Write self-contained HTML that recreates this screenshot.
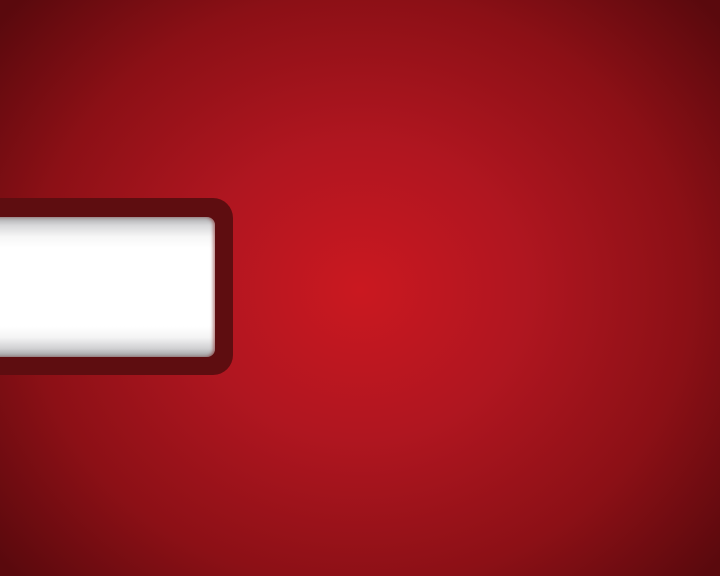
<!DOCTYPE html>
<html><head><style>
html,body{margin:0;padding:0}
body{width:720px;height:576px;overflow:hidden;position:relative;
background:radial-gradient(ellipse 470px 420px at 360px 290px,#ca1820 0%,#b01620 35%,#8c1016 70%,#5a090d 100%);}
.outer{position:absolute;left:-30px;top:198px;width:263px;height:177px;border-radius:20px;background:#5e0d10;}
.inner{position:absolute;left:-30px;top:217px;width:245px;height:140px;border-radius:8px;
background:linear-gradient(#a8a8aa 0%,#d8d8da 6%,#f6f6f6 14%,#fff 22%,#fff 78%,#f4f4f4 86%,#d0d0d2 94%,#9e9ea0 100%);
box-shadow:inset -2px 0 3px rgba(120,20,20,.5);}
</style></head><body>
<div class="outer"></div><div class="inner"></div>
</body></html>
